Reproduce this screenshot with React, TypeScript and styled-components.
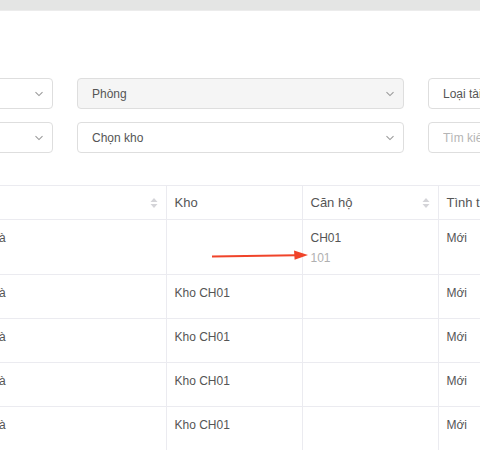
import React from "react";
import styled, { createGlobalStyle } from "styled-components";

const GlobalStyle = createGlobalStyle`
  html, body {
    margin: 0;
    padding: 0;
    background: #fff;
    font-family: "Liberation Sans", Arial, sans-serif;
    overflow: hidden;
  }
`;

const Page = styled.div`
  width: 480px;
  height: 450px;
  overflow: hidden;
  background: #fff;
`;

const TopBar = styled.div`
  height: 10px;
  background: #e4e5e4;
  border-bottom: 1px solid #ececec;
`;

const Content = styled.div`
  position: relative;
  margin-left: -41px;
  width: 700px;
  padding-top: 67px;
`;

const Filters = styled.div`
  display: grid;
  grid-template-columns: 94px 327px 200px;
  column-gap: 24px;
  row-gap: 13px;
`;

const Field = styled.div<{ $disabled?: boolean }>`
  height: 31px;
  box-sizing: border-box;
  border: 1px solid #dedede;
  border-radius: 4px;
  background: ${(p) => (p.$disabled ? "#f5f5f5" : "#fff")};
  display: flex;
  align-items: center;
  padding: 0 8px 0 14px;
  font-size: 12px;
  color: #555;
`;

const FieldText = styled.span<{ $placeholder?: boolean }>`
  flex: 1;
  white-space: nowrap;
  overflow: hidden;
  color: ${(p) => (p.$placeholder ? "#b5b5b5" : "#555")};
`;

const Chevron = () => (
  <svg width="10" height="6" viewBox="0 0 10 6">
    <path d="M1.5 1.2 L5 4.6 L8.5 1.2" fill="none" stroke="#9a9a9a" strokeWidth="1.1" />
  </svg>
);

const Table = styled.table`
  margin-top: 32px;
  border-collapse: collapse;
  table-layout: fixed;
  width: 679px;
  border-top: 1px solid #ebebf0;
`;

const HeadCell = styled.th<{ $w: number }>`
  width: ${(p) => p.$w}px;
  height: 34px;
  box-sizing: border-box;
  padding: 0 8px;
  text-align: left;
  font-weight: normal;
  font-size: 13px;
  color: #555;
  border-right: 1px solid #ebebf0;
  border-bottom: 1px solid #ebebf0;
  white-space: nowrap;
  overflow: hidden;
`;

const HeadInner = styled.div`
  display: flex;
  align-items: center;
  justify-content: space-between;
`;

const Cell = styled.td`
  height: 44px;
  box-sizing: border-box;
  padding: 8px 8px 6px;
  vertical-align: top;
  font-size: 12px;
  line-height: 20px;
  color: #555;
  border-right: 1px solid #ebebf0;
  border-bottom: 1px solid #ebebf0;
  white-space: nowrap;
  overflow: hidden;
`;

const SubText = styled.div`
  color: #b0b0b0;
`;

const SortIcon = () => (
  <svg width="8" height="12" viewBox="0 0 8 12">
    <path d="M4 1 L7.5 5 L0.5 5 Z" fill="#d4d4d8" />
    <path d="M4 11 L7.5 7 L0.5 7 Z" fill="#d4d4d8" />
  </svg>
);

const Arrow = styled.svg`
  position: absolute;
  left: 253px;
  top: 236px;
`;

const rows = [
  { kho: "", can: "CH01", sub: "101", status: "Mới" },
  { kho: "Kho CH01", can: "", sub: "", status: "Mới" },
  { kho: "Kho CH01", can: "", sub: "", status: "Mới" },
  { kho: "Kho CH01", can: "", sub: "", status: "Mới" },
  { kho: "Kho CH01", can: "", sub: "", status: "Mới" },
];

export default function App() {
  return (
    <Page>
      <GlobalStyle />
      <TopBar />
      <Content>
        <Filters>
          <Field>
            <FieldText />
            <Chevron />
          </Field>
          <Field $disabled>
            <FieldText>Phòng</FieldText>
            <Chevron />
          </Field>
          <Field>
            <FieldText>Loại tài sản</FieldText>
            <Chevron />
          </Field>
          <Field>
            <FieldText />
            <Chevron />
          </Field>
          <Field>
            <FieldText>Chọn kho</FieldText>
            <Chevron />
          </Field>
          <Field>
            <FieldText $placeholder>Tìm kiếm</FieldText>
          </Field>
        </Filters>

        <Table>
          <thead>
            <tr>
              <HeadCell $w={207}>
                <HeadInner>
                  <span />
                  <SortIcon />
                </HeadInner>
              </HeadCell>
              <HeadCell $w={136}>Kho</HeadCell>
              <HeadCell $w={136}>
                <HeadInner>
                  <span>Căn hộ</span>
                  <SortIcon />
                </HeadInner>
              </HeadCell>
              <HeadCell $w={200}>Tình trạng</HeadCell>
            </tr>
          </thead>
          <tbody>
            {rows.map((r, i) => (
              <tr key={i}>
                <Cell>Bàn trà</Cell>
                <Cell>{r.kho}</Cell>
                <Cell>
                  {r.can && <div>{r.can}</div>}
                  {r.sub && <SubText>{r.sub}</SubText>}
                </Cell>
                <Cell>{r.status}</Cell>
              </tr>
            ))}
          </tbody>
        </Table>

        <Arrow width="100" height="16" viewBox="0 0 100 16">
          <line x1="0" y1="9.5" x2="84" y2="8.2" stroke="#f0442a" strokeWidth="2" />
          <path d="M96 8 L82 3.5 L82.6 12.8 Z" fill="#f0442a" />
        </Arrow>
      </Content>
    </Page>
  );
}
